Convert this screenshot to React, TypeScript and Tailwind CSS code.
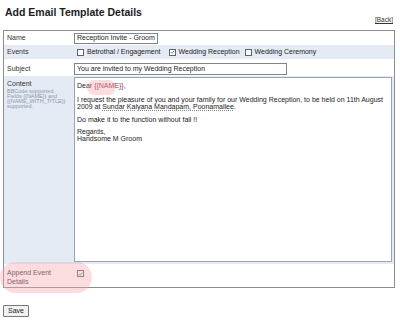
import React from "react";

const Checkbox = ({ checked }: { checked?: boolean }) => (
  <span className="inline-flex items-center justify-center w-[7px] h-[7px] border border-[#5b6470] bg-white shrink-0">
    {checked && (
      <svg viewBox="0 0 8 8" className="w-[6px] h-[6px]">
        <path d="M1.3 4.1 L3.2 6 L6.8 1.8" stroke="#3a7a3a" strokeWidth="1.3" fill="none" />
      </svg>
    )}
  </span>
);

const Label = ({ children }: { children: React.ReactNode }) => (
  <div className="w-[70px] shrink-0 pl-[3px] text-[#333]">{children}</div>
);

export default function App() {
  return (
    <div className="relative w-[400px] h-[322px] bg-white text-[7px] leading-[8px] text-[#222] overflow-hidden" style={{ fontFamily: '"Liberation Sans", Arial, sans-serif' }}>
      <h1 className="pl-[5px] pt-[6px] text-[10.5px] leading-[13px] font-bold text-[#1c1c1c]">Add Email Template Details</h1>
      <div className="flex justify-end pr-[7px] mt-[-3px]">
        <a className="underline text-[#333] text-[6.5px] leading-[8px]">[Back]</a>
      </div>

      {/* form table */}
      <div className="mx-[3px] mt-[6px] w-[392px] border border-[#868e96] flex flex-col">
        <div className="flex items-center h-[14px]">
          <Label>Name</Label>
          <div className="w-[84px] h-[11px] border border-[#7a8694] px-[2px] flex items-center">Reception Invite - Groom</div>
        </div>
        <div className="flex items-center h-[14px] bg-[#e5ebf5]">
          <Label>Events</Label>
          <div className="flex items-center gap-[3px] pl-[3px]">
            <Checkbox />
            <span className="mr-[5px]">Betrothal / Engagement</span>
            <Checkbox checked />
            <span className="mr-[2px]">Wedding Reception</span>
            <Checkbox />
            <span>Wedding Ceremony</span>
          </div>
        </div>
        <div className="flex items-start h-[17px] pt-[4px]">
          <div className="w-[70px] shrink-0 pl-[3px] pt-[2px] text-[#333]">Subject</div>
          <div className="w-[213px] h-[12px] border border-[#7a8694] px-[2px] flex items-center">You are invited to my Wedding Reception</div>
        </div>
        <div className="flex h-[188px] bg-[#e5ebf5] pt-[1px] pb-[2px]">
          <div className="w-[70px] shrink-0 pl-[3px] pt-[3px]">
            <div className="text-[#333]">Content</div>
            <div className="text-[5.5px] leading-[5px] text-[#8c98a8] mt-[1px]">
              BBCode supported,<br />Fields {"{{NAME}}"} and<br />{"{{NAME_WITH_TITLE}}"}<br />supported.
            </div>
          </div>
          <div className="flex-1 mr-[2px] border border-[#9aa4b0] bg-white pl-[2px] pt-[4px] text-[#222] text-[7px] leading-[7px]">
            <p>Dear <span className="text-[#8e2b48]">{"{{NAME}}"}</span>,</p>
            <p className="mt-[7px]">I request the pleasure of you and your family for our Wedding Reception, to be held on 11th August<br />2009 at <span className="underline decoration-dotted decoration-[#888]">Sundar Kalyana Mandapam, Poonamallee</span>.</p>
            <p className="mt-[5.5px]">Do make it to the function without fail !!</p>
            <p className="mt-[5px]">Regards,<br />Handsome M Groom</p>
          </div>
        </div>
        <div className="flex items-start h-[23px] pt-[4px]">
          <div className="w-[70px] shrink-0 pl-[3px] text-[#333] leading-[9px]">Append Event<br />Details</div>
          <div className="pl-[3px] pt-[2px]"><Checkbox checked /></div>
        </div>
      </div>

      <button className="ml-[3px] mt-[17px] h-[12px] px-[4px] border border-[#777] bg-[#f2f2f2] text-[7px] leading-[8px] text-[#222] rounded-[1px]">Save</button>

      {/* highlight overlays */}
      <div className="absolute left-[87px] top-[80px] w-[29px] h-[15px] rounded-full bg-[#f6a8b0]/40" />
      <div className="absolute left-[0px] top-[262px] w-[92px] h-[31px] rounded-full bg-[#f6a8b0]/40" />
    </div>
  );
}
